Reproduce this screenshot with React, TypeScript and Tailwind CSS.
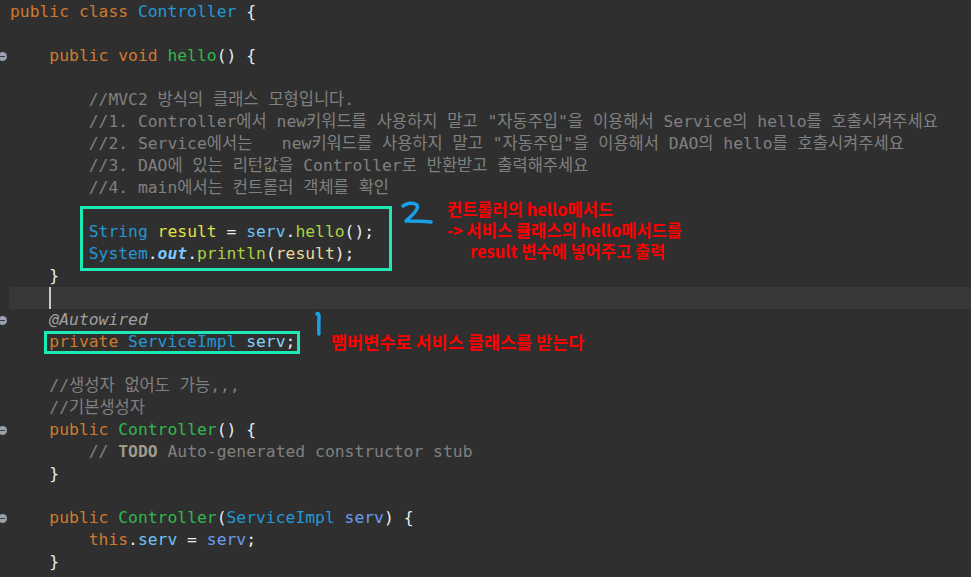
import React from 'react';

type Seg = [string, string?];

const C = {
  kw: 'text-[#cf7a2e]',
  type: 'text-[#2497d4]',
  decl: 'text-[#30b84c]',
  p: 'text-[#e6edf3]',
  cm: 'text-[#808080]',
  local: 'text-[#e0e048]',
  field: 'text-[#6cc4f5]',
  fieldDecl: 'text-[#86cffa]',
  call: 'text-[#aed042]',
  arg: 'text-[#e6d99a]',
  param: 'text-[#6b9af0]',
  ann: 'text-[#a0a0a0] italic',
  todo: 'text-[#a49a8c] font-bold',
  out: 'text-[#7cc8ff] italic font-bold',
};

// hangul falls back to the CJK font; size it so its advance matches the editor
const Hangul = ({ text }: { text: string }) => (
  <>
    {text.split(/([\uAC00-\uD7A3]+)/).map((part, i) =>
      /[\uAC00-\uD7A3]/.test(part) ? (
        <span key={i} className="text-[16.5px]">{part}</span>
      ) : (
        part
      )
    )}
  </>
);

const lines: Seg[][] = [
  [['public class ', C.kw], ['Controller', C.type], [' {', C.p]],
  [],
  [['    public void ', C.kw], ['hello', C.decl], ['() {', C.p]],
  [],
  [['        //MVC2 방식의 클래스 모형입니다.', C.cm]],
  [['        //1. Controller에서 new키워드를 사용하지 말고 "자동주입"을 이용해서 Service의 hello를 호출시켜주세요', C.cm]],
  [['        //2. Service에서는   new키워드를 사용하지 말고 "자동주입"을 이용해서 DAO의 hello를 호출시켜주세요', C.cm]],
  [['        //3. DAO에 있는 리턴값을 Controller로 반환받고 출력해주세요', C.cm]],
  [['        //4. main에서는 컨트롤러 객체를 확인', C.cm]],
  [],
  [['        '], ['String', C.type], [' '], ['result', C.local], [' = ', C.p], ['serv', C.field], ['.', C.p], ['hello', C.call], ['();', C.p]],
  [['        '], ['System', C.type], ['.', C.p], ['out', C.out], ['.', C.p], ['println', C.call], ['(', C.p], ['result', C.arg], [');', C.p]],
  [['    }', C.p]],
  [],
  [['    '], ['@Autowired', C.ann]],
  [['    private ', C.kw], ['ServiceImpl', C.type], [' '], ['serv', C.fieldDecl], [';', C.p]],
  [],
  [['    //생성자 없어도 가능,,,', C.cm]],
  [['    //기본생성자', C.cm]],
  [['    public ', C.kw], ['Controller', C.decl], ['() {', C.p]],
  [['        // ', C.cm], ['TODO', C.todo], [' Auto-generated constructor stub', C.cm]],
  [['    }', C.p]],
  [],
  [['    public ', C.kw], ['Controller', C.decl], ['(', C.p], ['ServiceImpl', C.type], [' '], ['serv', C.param], [') {', C.p]],
  [['        this', C.kw], ['.', C.p], ['serv', C.field], [' = ', C.p], ['serv', C.param], [';', C.p]],
  [['    }', C.p]],
];

const folds = [2, 14, 19, 23];
const cursorLine = 13;

const FoldMark = () => (
  <span className="absolute left-[-2px] top-[7px] w-[9px] h-[9px] rounded-full bg-[#9aa3ad] flex items-center justify-center">
    <span className="w-[5px] h-[1.5px] bg-[#3a3f45]" />
  </span>
);

const App: React.FC = () => {
  return (
    <div className="relative w-full h-[577px] overflow-hidden bg-[#2f2f2f] font-['DejaVu_Sans_Mono','Noto_Sans_CJK_KR',monospace] text-[16.35px]">
      <div className="flex flex-col pt-[1px]">
        {lines.map((segs, i) => (
          <div key={i} className="relative h-[22px] leading-[22px] whitespace-pre">
            {folds.includes(i) && <FoldMark />}
            {i === cursorLine ? (
              <div className="ml-[9px] h-[22px] bg-[#383838] flex pl-[40px]">
                <span className="w-[2px] h-[22px] bg-[#c8c8c8]" />
              </div>
            ) : (
              <div className="pl-[10px]">
                {segs.map(([t, cls], j) => (
                  <span key={j} className={cls ?? C.p}>
                    <Hangul text={t} />
                  </span>
                ))}
              </div>
            )}
          </div>
        ))}
      </div>

      {/* annotation 2 */}
      <div className="absolute left-[80px] top-[206px] w-[312px] h-[65px] border-[3px] border-[#1de9b6]" />
      <svg className="absolute left-[400px] top-[199px]" width="34" height="28" viewBox="0 0 34 28">
        <path
          d="M3 7 C7 4 13 3 17 6 C19 9 15 14 8 20 L6 22 C14 22 22 22 31 23"
          fill="none"
          stroke="#1aa0e6"
          strokeWidth="3.5"
          strokeLinecap="round"
          strokeLinejoin="round"
        />
      </svg>
      <div className="absolute left-[447px] top-[199px] flex flex-col font-['Noto_Sans_CJK_KR',sans-serif] font-bold text-[16.5px] leading-[21px] text-[#ff0000]">
        <span>컨트롤러의 hello메서드</span>
        <span>-&gt; 서비스 클래스의 hello메서드를</span>
        <span className="pl-[23px]">result 변수에 넣어주고 출력</span>
      </div>

      {/* annotation 1 */}
      <div className="absolute left-[44px] top-[331px] w-[256px] h-[23px] border-[3px] border-[#1de9b6]" />
      <svg className="absolute left-[312px] top-[310px]" width="12" height="28" viewBox="0 0 12 28">
        <path
          d="M5 4 C6 3 7 4 7 6 C7 12 6.5 18 7 24"
          fill="none"
          stroke="#1aa0e6"
          strokeWidth="3.5"
          strokeLinecap="round"
        />
      </svg>
      <div className="absolute left-[331px] top-[331px] font-['Noto_Sans_CJK_KR',sans-serif] font-bold text-[17.5px] leading-[22px] text-[#ff0000]">
        맴버변수로 서비스 클래스를 받는다
      </div>
    </div>
  );
};

export default App;
